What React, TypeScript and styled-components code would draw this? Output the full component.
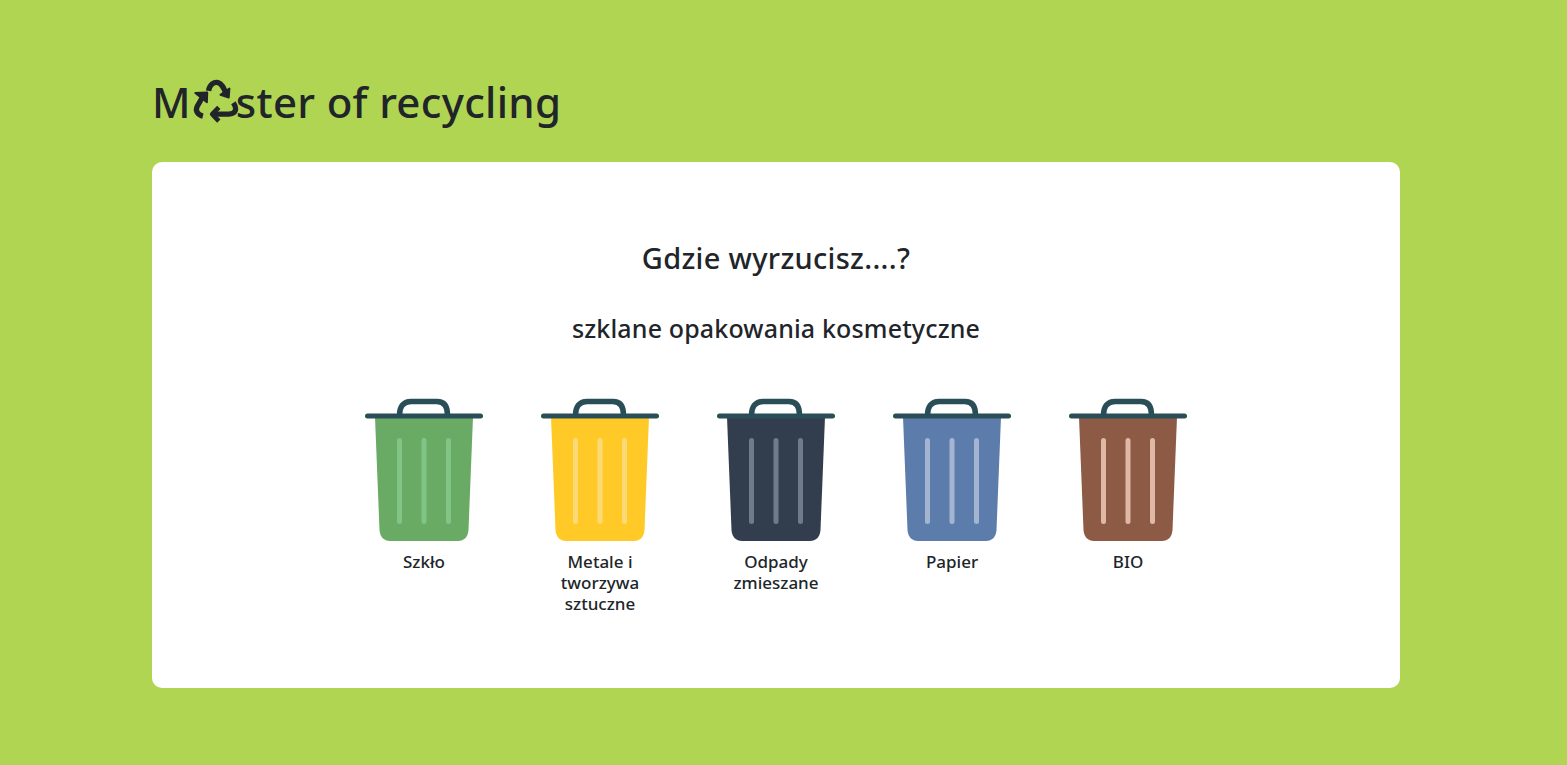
import React from 'react';
import styled, { createGlobalStyle } from 'styled-components';

const GlobalStyle = createGlobalStyle`
html, body {
  margin: 0;
  padding: 0;
  background: #b0d553;
  color: #212529;
  font-family: "Noto Sans", "Open Sans", sans-serif;
}
`;

const Page = styled.div`
  width: 1248px;
  height: 765px;
  margin: 0 auto 0 152px;
  padding-top: 72px;
  box-sizing: border-box;
`;

const Logo = styled.h1`
  display: flex;
  align-items: center;
  height: 60px;
  margin: 0 0 30px;
  font-size: 42px;
  font-weight: 500;
  line-height: 60px;
  letter-spacing: 0.3px;
`;

const LogoIcon = styled.svg`
  width: 47px;
  height: 48px;
  margin: -3px -3px 0 1px;
  flex: none;
`;

const Card = styled.main`
  height: 526px;
  background: #fff;
  border-radius: 10px;
  padding-top: 75px;
  box-sizing: border-box;
  text-align: center;
`;

const Question = styled.h2`
  margin: 0 0 31px;
  font-size: 29px;
  font-weight: 500;
  line-height: 42px;
  letter-spacing: 0.3px;
`;

const Item = styled.h3`
  margin: 0 0 52px;
  font-size: 25px;
  font-weight: 500;
  line-height: 36px;
  letter-spacing: 0.15px;
`;

const Bins = styled.div`
  display: flex;
  justify-content: center;
  gap: 56px;
`;

const Bin = styled.button`
  width: 120px;
  padding: 0;
  border: 0;
  background: none;
  color: inherit;
  font: inherit;
  display: flex;
  flex-direction: column;
  align-items: center;
`;

const BinIcon = styled.svg`
  display: block;
  width: 120px;
  height: 144px;
`;

const BinLabel = styled.span`
  width: 104px;
  margin-top: 9px;
  font-size: 17px;
  font-weight: 500;
  line-height: 21px;
`;

const bins = [
  { label: 'Szkło', body: '#69aa64', rib: '#80c585' },
  { label: 'Metale i tworzywa sztuczne', body: '#ffca28', rib: '#fbd975' },
  { label: 'Odpady zmieszane', body: '#323e4d', rib: '#6f7b8b' },
  { label: 'Papier', body: '#5c7dab', rib: '#a3b5d0' },
  { label: 'BIO', body: '#8d5b45', rib: '#e0b9a6' },
];

function RecycleIcon() {
  return (
    <LogoIcon viewBox="160 50 140 145" fill="none" stroke="#212529" aria-hidden="true">
      <path d="M209 92 C212 72 226 64 238 67 C250 70 256 86 262 100" strokeWidth="16" />
      <path d="M272 85 L270 112 L245 104 Z" strokeWidth="6" strokeLinejoin="round" fill="#212529" />
      <path d="M190 112 L175 138 C168 152 176 164 192 168" strokeWidth="16" />
      <path d="M169 98 L205 97 L204 126 Z" fill="#212529" strokeWidth="6" strokeLinejoin="round" />
      <path d="M228 162 L270 162 C292 162 296 146 284 128" strokeWidth="16" />
      <path d="M240 142 L220 162 L240 183" strokeWidth="14" strokeLinejoin="round" />
    </LogoIcon>
  );
}

function TrashBin({ body, rib }: { body: string; rib: string }) {
  return (
    <BinIcon viewBox="0 0 120 144" aria-hidden="true">
      <path d="M11 19 H109 L104.500 132 C104 139 100 143 94 143 H26 C20 143 16 139 15.500 132 Z" fill={body} />
      <rect x="33" y="40" width="5" height="86" rx="2.500" fill={rib} />
      <rect x="57.500" y="40" width="5" height="86" rx="2.500" fill={rib} />
      <rect x="82" y="40" width="5" height="86" rx="2.500" fill={rib} />
      <path d="M35.500 17 C35.500 8 40 3.500 47 3.500 H73 C80 3.500 83.500 8 83.500 17" fill="none" stroke="#2a4e57" strokeWidth="5.500" />
      <rect x="1" y="15.500" width="118" height="5" rx="2.500" fill="#2a4e57" />
    </BinIcon>
  );
}

export default function App() {
  return (
    <>
      <GlobalStyle />
      <Page>
        <Logo>
          M
          <RecycleIcon />
          ster of recycling
        </Logo>
        <Card>
          <Question>Gdzie wyrzucisz....?</Question>
          <Item>szklane opakowania kosmetyczne</Item>
          <Bins>
            {bins.map((bin) => (
              <Bin key={bin.label}>
                <TrashBin body={bin.body} rib={bin.rib} />
                <BinLabel>{bin.label}</BinLabel>
              </Bin>
            ))}
          </Bins>
        </Card>
      </Page>
    </>
  );
}
